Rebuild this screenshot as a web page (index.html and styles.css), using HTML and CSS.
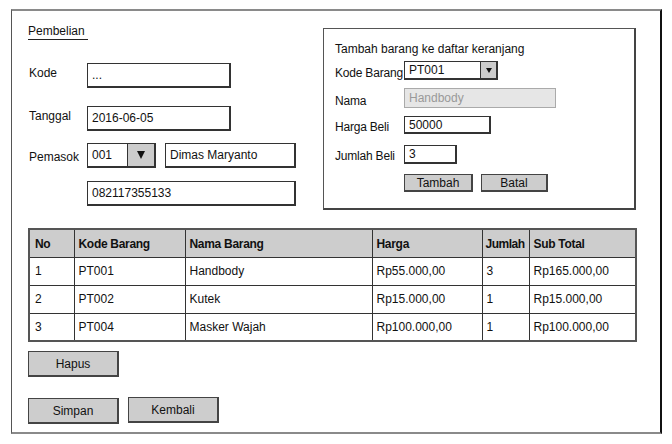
FILE: index.html
```html
<!DOCTYPE html>
<html lang="id">
<head>
  <meta charset="UTF-8">
  <title>Pembelian</title>
  <link rel="stylesheet" href="styles.css">
</head>
<body>
  <div class="frame">
    <div class="top">
      <div class="purchase">
        <div class="title"><span>Pembelian</span></div>

        <div class="form-row row-kode">
          <span class="label">Kode</span>
          <div class="field field-kode">...</div>
        </div>

        <div class="form-row row-tanggal">
          <span class="label">Tanggal</span>
          <div class="field field-kode">2016-06-05</div>
        </div>

        <div class="form-row row-pemasok">
          <span class="label label-low">Pemasok</span>
          <div class="combo combo-big">
            <div class="combo-value">001</div>
            <div class="combo-btn"><span class="arrow"></span></div>
          </div>
          <div class="field field-name">Dimas Maryanto</div>
        </div>

        <div class="form-row row-phone">
          <span class="label"></span>
          <div class="field field-phone">082117355133</div>
        </div>
      </div>

      <div class="panel">
        <div class="panel-title">Tambah barang ke daftar keranjang</div>

        <div class="panel-row row-barang">
          <span class="plabel">Kode Barang</span>
          <div class="combo combo-small">
            <div class="combo-value">PT001</div>
            <div class="combo-btn"><span class="arrow arrow-small"></span></div>
          </div>
        </div>

        <div class="panel-row row-nama">
          <span class="plabel">Nama</span>
          <div class="field field-disabled">Handbody</div>
        </div>

        <div class="panel-row row-harga">
          <span class="plabel">Harga Beli</span>
          <div class="field field-harga">50000</div>
        </div>

        <div class="panel-row row-jumlah">
          <span class="plabel">Jumlah Beli</span>
          <div class="field field-jumlah">3</div>
        </div>

        <div class="panel-row row-buttons">
          <span class="plabel"></span>
          <button class="btn btn-tambah">Tambah</button>
          <button class="btn btn-batal">Batal</button>
        </div>
      </div>
    </div>

    <table class="grid">
      <thead>
        <tr>
          <th class="c-no">No</th>
          <th class="c-kode">Kode Barang</th>
          <th class="c-nama">Nama Barang</th>
          <th class="c-harga">Harga</th>
          <th class="c-jml">Jumlah</th>
          <th class="c-sub">Sub Total</th>
        </tr>
      </thead>
      <tbody>
        <tr>
          <td>1</td><td>PT001</td><td>Handbody</td><td>Rp55.000,00</td><td>3</td><td>Rp165.000,00</td>
        </tr>
        <tr>
          <td>2</td><td>PT002</td><td>Kutek</td><td>Rp15.000,00</td><td>1</td><td>Rp15.000,00</td>
        </tr>
        <tr>
          <td>3</td><td>PT004</td><td>Masker Wajah</td><td>Rp100.000,00</td><td>1</td><td>Rp100.000,00</td>
        </tr>
      </tbody>
    </table>

    <div class="delete-row">
      <button class="btn btn-big">Hapus</button>
    </div>

    <div class="actions">
      <button class="btn btn-big btn-simpan">Simpan</button>
      <button class="btn btn-big btn-kembali">Kembali</button>
    </div>
  </div>
</body>
</html>
```

FILE: styles.css
```css
* {
  margin: 0;
  padding: 0;
  box-sizing: border-box;
}

body {
  background: #fff;
  font-family: 'Liberation Sans', Arial, sans-serif;
  font-size: 12px;
  color: #111;
}

.frame {
  margin: 9px 0 0 11px;
  width: 651px;
  height: 425px;
  border-top: 2px solid #8a8a8a;
  border-left: 1px solid #555;
  border-right: 2px solid #111;
  border-bottom: 2px solid #8a8a8a;
  padding-left: 16px;
}

.top {
  display: flex;
  margin-top: 13px;
}

/* kolom kiri */
.purchase {
  width: 268px;
  margin-right: 27px;
}

.title {
  line-height: 14px;
}

.title span {
  display: inline-block;
  padding: 0 3px 1px 0;
  border-bottom: 1px solid #222;
}

.form-row {
  display: flex;
  align-items: flex-start;
  height: 25px;
}

.row-kode { margin-top: 23px; }
.row-tanggal { margin-top: 18px; }
.row-pemasok { margin-top: 12px; height: 25px; }
.row-phone { margin-top: 13px; }

.label {
  width: 59px;
  flex-shrink: 0;
  padding-left: 1px;
  margin-top: 3px;
  line-height: 14px;
}

.label-low {
  margin-top: 7px;
}

.field {
  height: 100%;
  border: 1px solid #333;
  border-bottom-width: 2px;
  border-right-width: 2px;
  padding-left: 4px;
  display: flex;
  align-items: center;
  white-space: nowrap;
  background: #fff;
}

.field-kode { width: 144px; }
.field-name { width: 131px; margin-left: 9px; }
.field-phone { width: 209px; }

.combo {
  display: flex;
  height: 100%;
}

.combo-value {
  flex: 1;
  border: 1px solid #333;
  border-bottom-width: 2px;
  padding-left: 4px;
  display: flex;
  align-items: center;
}

.combo-btn {
  background: #ccc;
  border: 1px solid #333;
  border-left: none;
  border-bottom-width: 2px;
  border-right-width: 2px;
  display: flex;
  align-items: center;
  justify-content: center;
}

.combo-big { width: 69px; }
.combo-big .combo-btn { width: 28px; }

.combo-small { width: 94px; }
.combo-small .combo-btn { width: 17px; }

.arrow {
  width: 0;
  height: 0;
  border-left: 4px solid transparent;
  border-right: 4px solid transparent;
  border-top: 8px solid #111;
}

.arrow-small {
  border-left-width: 3px;
  border-right-width: 3px;
  border-top-width: 5px;
}

/* panel tambah barang */
.panel {
  width: 313px;
  height: 182px;
  margin-top: 4px;
  border: 1px solid #555;
  border-right: 2px solid #444;
  border-bottom: 2px solid #444;
  padding: 13px 0 0 11px;
}

.panel-title {
  line-height: 14px;
}

.panel-row {
  display: flex;
  align-items: center;
}

.plabel {
  width: 69px;
  flex-shrink: 0;
  white-space: nowrap;
  line-height: 14px;
  letter-spacing: -0.2px;
}

.row-barang { margin-top: 5px; height: 19px; }
.row-barang .plabel { margin-top: 4px; }
.row-nama { margin-top: 8px; height: 20px; }
.row-nama .plabel { margin-top: 5px; }
.row-harga { margin-top: 8px; height: 18px; }
.row-harga .plabel { margin-top: 3px; }
.row-jumlah { margin-top: 11px; height: 19px; }
.row-jumlah .plabel { margin-top: 3px; }
.row-buttons { margin-top: 10px; height: 18px; }

.field-disabled {
  width: 152px;
  background: #e6e6e6;
  border: 1px solid #aaa;
  color: #999;
}

.field-harga { width: 87px; }
.field-jumlah { width: 53px; }

/* tabel */
.grid {
  margin-top: 18px;
  border-collapse: collapse;
  width: 607px;
  border: 2px solid #555;
  table-layout: fixed;
}

.grid th,
.grid td {
  height: 28px;
  border: 1px solid #333;
  text-align: left;
  padding: 0 0 0 4px;
  font-weight: normal;
  white-space: nowrap;
}

.grid th {
  background: #cdcdcd;
  font-weight: bold;
  letter-spacing: -0.3px;
  padding-top: 2px;
}

.grid td:first-child,
.grid th:first-child {
  padding-left: 5px;
}

.grid th.c-jml {
  padding-left: 3px;
  letter-spacing: -0.5px;
}

.c-no { width: 45px; }
.c-kode { width: 111px; }
.c-nama { width: 187px; }
.c-harga { width: 110px; }
.c-jml { width: 47px; }
.c-sub { width: 107px; }

/* tombol */
.btn {
  font-family: inherit;
  font-size: 12px;
  color: #111;
  background: #cdcdcd;
  border: 1px solid #444;
  border-right-width: 2px;
  border-bottom-width: 2px;
  cursor: pointer;
}

.btn-tambah { width: 69px; height: 100%; }
.btn-batal { width: 67px; height: 100%; margin-left: 8px; }

.delete-row {
  margin-top: 9px;
}

.btn-big {
  width: 91px;
  height: 26px;
}

.actions {
  display: flex;
  align-items: flex-start;
  margin-top: 21px;
}

.btn-kembali {
  margin-left: 9px;
  margin-top: -1px;
}
```
